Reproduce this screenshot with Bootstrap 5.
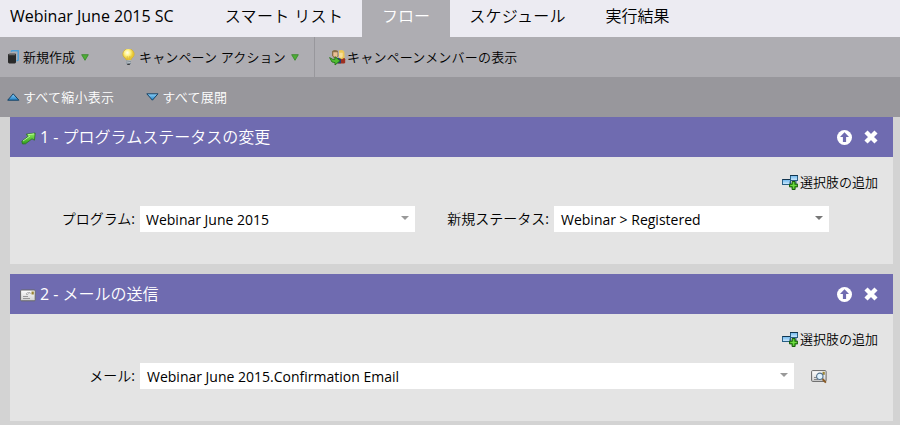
<!DOCTYPE html>
<html lang="ja">
<head>
<meta charset="utf-8">
<meta name="viewport" content="width=device-width, initial-scale=1">
<title>Webinar June 2015 SC</title>
<link href="https://cdn.jsdelivr.net/npm/bootstrap@5.3.0/dist/css/bootstrap.min.css" rel="stylesheet">
<style>
body{font-family:"Open Sans","Noto Sans CJK JP",sans-serif;font-size:13px;line-height:20px;color:#000;background:#d3d3d3;height:425px;overflow:hidden}
svg{display:block;flex:none}
.ja{font-family:"Open Sans","Noto Sans CJK JP DemiLight","Noto Sans CJK JP Light","Noto Sans CJK JP",sans-serif;font-weight:350}
.tabs-bar{height:37px;background:#ecebf2;font-size:16px;line-height:32px}
.tabs-bar .nav-link{color:#000;padding:0 0 5px;height:37px;font-weight:350}
.tabs-bar .nav-link.active{background:#aeadb2;color:#fff}
.doc-title{width:196px;padding-left:10px}
.tabs-bar .tab-a{width:166px;padding-left:10px;letter-spacing:.35px}
.tab-b{width:88px}.tab-c{width:135px;letter-spacing:.25px}.tab-d{width:105px}
.tools{height:40px;background:#aeadb2}
.tools .tool{height:40px}
.tool-new{width:121px;padding-left:7px}
.tool-new .ja{margin-left:3px}
.tool-new .drop{margin-left:6px}
.tool-act{width:194px;padding-left:1px;border-right:1px solid #98979c}
.tool-act .ja{letter-spacing:.15px}
.tool-act .drop{margin-left:5px}
.tool-mem{padding-left:14px}
.tool-mem .ja{letter-spacing:.2px;margin-left:1px}
.subtools{height:40px;background:#98979c;color:#fff;padding-left:7px}
.subtools .ja{margin-left:3px;letter-spacing:.25px}
.expand{margin-left:32px}
.step{width:883px;margin-left:10px;margin-bottom:10px;background:#e4e4e4}
.step-head{height:40px;background:#6f6bb0;color:#fff;font-size:16px;padding:0 15px 0 10px}
.step-head .ja{font-weight:400}
.step-head .kind{width:16px;margin-right:4px;margin-top:2px}
.step-head .shut{margin-left:12px}
.step-body{height:107px;padding:15px 15px 0 0}
.choice{gap:2px}
.fields{height:26px;margin-top:14px;font-size:14px}
.lbl{width:130px;padding-right:5px;text-align:right}
.lbl.ja{font-weight:400}
.lbl-b{width:139px}
.pick{width:275px;height:26px;background:#fff;padding:1px 6px 0 6px}
.pick-status{padding-left:7px}
.pick-long{width:654px;padding-left:7px}
.arrow{border:4px solid transparent;border-top-color:#999;border-bottom:0;margin-top:-4px}
.dark-arrow{border-top-color:#777}
</style>
<script src="https://cdn.jsdelivr.net/npm/bootstrap@5.3.0/dist/js/bootstrap.bundle.min.js"></script>
</head>
<body>
<svg width="0" height="0" class="position-absolute" aria-hidden="true">
  <defs>
    <linearGradient id="blue" x2="0" y2="1"><stop stop-color="#8fd3fb"/><stop offset="1" stop-color="#1f7fc4"/></linearGradient>
    <linearGradient id="sky" x2="0" y2="1"><stop stop-color="#6db7ee"/><stop offset="1" stop-color="#d2ebfc"/></linearGradient>
    <linearGradient id="green" x2="0" y2="1"><stop stop-color="#8df05a"/><stop offset="1" stop-color="#2f9d1c"/></linearGradient>
    <radialGradient id="glow" cx=".4" cy=".35"><stop stop-color="#fffff0"/><stop offset=".5" stop-color="#fff48a"/><stop offset="1" stop-color="#e9c936"/></radialGradient>
    <linearGradient id="paper" x2="0" y2="1"><stop stop-color="#fff"/><stop offset="1" stop-color="#d2d2d2"/></linearGradient>
    <symbol id="drop" viewBox="0 0 8 7"><path d="M.7.7H7.3L4 6.3Z" fill="#4fae35" stroke="#3b8a30" stroke-width=".9"/></symbol>
    <symbol id="up" viewBox="0 0 15 15"><circle cx="7.5" cy="7.5" r="7.5" fill="#fff"/><path d="M7.5 2.3 12 7H9.1V12H5.9V7H3Z" fill="#6f6bb0"/></symbol>
    <symbol id="close" viewBox="0 0 14 14"><path d="M2 2 12 12M12 2 2 12" stroke="#fff" stroke-width="4.4"/></symbol>
    <symbol id="choice" viewBox="0 0 16 15"><rect x=".5" y="4.5" width="8" height="5" fill="url(#sky)" stroke="#285f86"/><path d="M.5 4.5H8.5" stroke="#12354f"/><rect x="8.5" y=".5" width="7" height="5" fill="url(#sky)" stroke="#285f86"/><path d="M8 .5H16" stroke="#12354f"/><path d="M8 9.5V6.5M14 6v3" stroke="#285f86"/><path d="M10.1 6.5h3v2.6h2.6v2.8h-2.6v2.6h-3v-2.6H7.5V9.1h2.6Z" fill="#43b51f" stroke="#185c0d"/><path d="M11.6 7.4v6M8.5 10.5h6" stroke="#74dc48" stroke-width=".9"/></symbol>
  </defs>
</svg>

<nav class="tabs-bar d-flex">
  <div class="doc-title text-nowrap">Webinar June 2015 SC</div>
  <div class="nav flex-nowrap text-center text-nowrap">
    <a class="nav-link ja tab-a" href="#">スマート リスト</a>
    <a class="nav-link ja tab-b active" href="#">フロー</a>
    <a class="nav-link ja tab-c" href="#">スケジュール</a>
    <a class="nav-link ja tab-d" href="#">実行結果</a>
  </div>
</nav>

<div class="tools d-flex text-nowrap">
  <div class="tool tool-new d-flex align-items-center">
    <svg width="13" height="16" viewBox="0 0 13 16"><path d="M4 2.7 5 1.7H11.2V11L9.5 12" fill="none" stroke="#4aa0da" stroke-width="1.4"/><path d="M1 6Q1 4.8 2.4 4.7H9V13Q9 14.4 7.7 14.4H2.3Q1 14.4 1 13Z" fill="#292929"/><path d="M1.5 6.3 3 4.6H8L8.5 6.3Z" fill="#686868"/></svg>
    <span class="ja">新規作成</span>
    <svg width="8" height="7" class="drop"><use href="#drop"/></svg>
  </div>
  <div class="tool tool-act d-flex align-items-center">
    <svg width="13" height="17" viewBox="0 0 13 17"><path d="M4.2 11Q4 9.5 2 8.3A5.5 5.5 0 1 1 11 8.3Q9 9.5 8.8 11.3Z" fill="url(#glow)" stroke="#cfac35" stroke-width=".7"/><path d="M5.3 7V11M7.7 7V11" stroke="#d6b645" stroke-width=".6"/><path d="M4.2 11.2H8.9V14.5L7.6 16H5.5L4.2 14.5Z" fill="#7a8590"/><path d="M4.3 12.2 8.8 11.6M4.3 14 8.8 13.3" stroke="#d5dce0" stroke-width=".7"/><path d="M5.3 15.4H7.8" stroke="#333"/></svg>
    <span class="ja ms-1">キャンペーン アクション</span>
    <svg width="8" height="7" class="drop"><use href="#drop"/></svg>
  </div>
  <div class="tool tool-mem d-flex align-items-center">
    <svg width="17" height="17" viewBox="0 0 17 17"><path d="M9 9h6.5l.7 1.2v3.5l-1 .8H9Z" fill="#9e2f20"/><path d="M7 9h5v5.3H7Z" fill="#243f75"/><path d="M10 1.5Q14.5.2 15.3 3L15.7 8.5 13 10.2 10 9Z" fill="#edc755"/><path d="M10.2 3.7h3.5v3.7l-1.5 1.5-2-1Z" fill="#f8de9b"/><path d="M3 2.3Q5.5-.2 9 2L9.4 6.8 7.5 9.3H5L3 6.5Z" fill="#8a7048"/><path d="M4.3 3.2H8.5V7L6.8 8.7 4.3 7Z" fill="#eac095"/><path d="M.6 8.6 3.7 10.3H6V7.7L11 11.8 6 16V13.6L3 13Z" fill="#50bd31" stroke="#257516" stroke-width=".9"/></svg>
    <span class="ja">キャンペーンメンバーの表示</span>
  </div>
</div>

<div class="subtools d-flex align-items-center text-nowrap">
  <svg width="13" height="8" viewBox="0 0 13 8"><path d="M.7 7.2 6.2.8 11.9 7.2Z" fill="url(#blue)" stroke="#174264"/></svg>
  <span class="ja">すべて縮小表示</span>
  <svg width="13" height="8" viewBox="0 0 13 8" class="expand"><path d="M.8.8H12L6.4 7.2Z" fill="url(#blue)" stroke="#174264"/></svg>
  <span class="ja">すべて展開</span>
</div>

<main>
  <section class="step">
    <header class="step-head d-flex align-items-center">
      <svg class="kind" height="13" viewBox="-1 0 16 13"><path d="M.8 9.3 7 4.5 5.2 2.2 14.2 1 13.4 8.2 11 6.8 4.5 11.8 1.5 12Z" fill="url(#green)" stroke="#2b7320" stroke-width=".8"/><path d="M2 9 9 4M7 2.7 13 1.8" stroke="#c9ffad" stroke-width=".8"/></svg>
      <span class="ja">1 - プログラムステータスの変更</span>
      <svg class="ms-auto" width="15" height="15"><use href="#up"/></svg>
      <svg class="shut" width="14" height="14"><use href="#close"/></svg>
    </header>
    <div class="step-body">
      <div class="choice d-flex justify-content-end align-items-center">
        <svg width="16" height="15"><use href="#choice"/></svg>
        <span class="ja">選択肢の追加</span>
      </div>
      <div class="fields d-flex align-items-center">
        <label class="lbl ja">プログラム:</label>
        <div class="pick d-flex align-items-center"><span>Webinar June 2015</span><i class="arrow ms-auto"></i></div>
        <label class="lbl lbl-b ja">新規ステータス:</label>
        <div class="pick pick-status d-flex align-items-center"><span>Webinar &gt; Registered</span><i class="arrow dark-arrow ms-auto"></i></div>
      </div>
    </div>
  </section>

  <section class="step">
    <header class="step-head d-flex align-items-center">
      <svg class="kind" height="13" viewBox="0 0 16 13"><rect x=".6" y="1" width="14.6" height="10.8" rx="1" fill="url(#paper)" stroke="#696969"/><path d="M3 7.5H8M3 9.5H10" stroke="#999"/><path d="M6 5Q7 3 9 3.5T11 5M6 5.5Q8 6.5 10 3" fill="none" stroke="#aaa" stroke-width=".8"/><path d="M11.5 2.5h2.3v3h-2.3Z" fill="#9a8434"/></svg>
      <span class="ja">2 - メールの送信</span>
      <svg class="ms-auto" width="15" height="15"><use href="#up"/></svg>
      <svg class="shut" width="14" height="14"><use href="#close"/></svg>
    </header>
    <div class="step-body">
      <div class="choice d-flex justify-content-end align-items-center">
        <svg width="16" height="15"><use href="#choice"/></svg>
        <span class="ja">選択肢の追加</span>
      </div>
      <div class="fields d-flex align-items-center">
        <label class="lbl ja">メール:</label>
        <div class="pick pick-long d-flex align-items-center"><span>Webinar June 2015.Confirmation Email</span><i class="arrow ms-auto"></i></div>
        <svg width="17" height="15" viewBox="0 0 17 15" class="ms-3"><rect x="1.6" y="1.6" width="14.5" height="10.8" rx="1" fill="url(#paper)" stroke="#666"/><path d="M4 8.5H7M4 10.5H8" stroke="#888"/><path d="M12.5 2.8h2.3v3h-2.3Z" fill="#9a8434"/><circle cx="9.8" cy="7.3" r="3.2" fill="#e0f3ff" stroke="#55718a" stroke-width="1.1"/><path d="m12.5 10 3.4 3.6" stroke="#8a5a25" stroke-width="1.9"/></svg>
      </div>
    </div>
  </section>
</main>
</body>
</html>
